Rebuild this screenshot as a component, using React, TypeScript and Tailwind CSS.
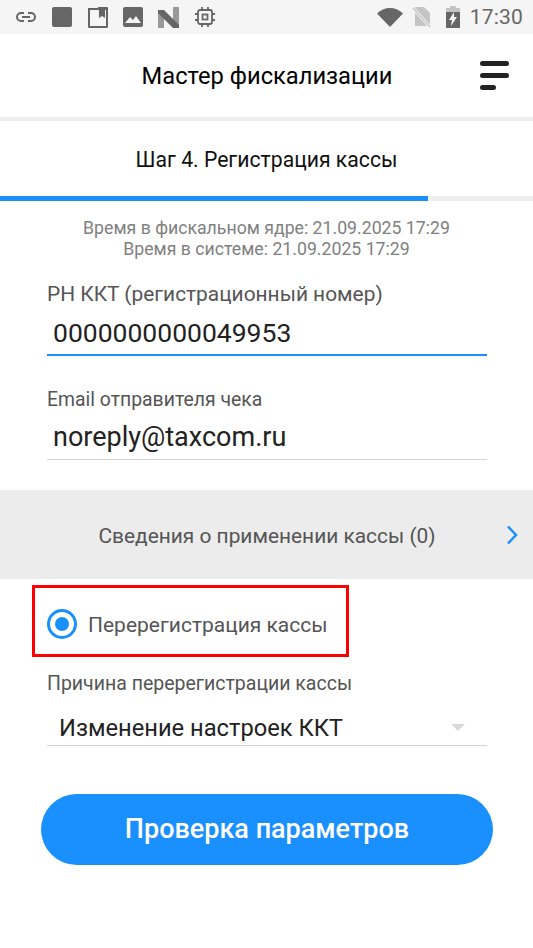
const font = { fontFamily: "Roboto, sans-serif" };

const StatusBar = () => (
  <div className="h-[34px] bg-[#f5f5f5] flex items-center pl-[15px] pr-[10px] text-[#666666]">
    <svg width="22" height="12" viewBox="0 0 22 12" fill="none" stroke="#666" strokeWidth="2" className="mr-[15px]">
      <path d="M9 2H6a4 4 0 0 0 0 8h3M13 2h3a4 4 0 0 1 0 8h-3M7 6h8" />
    </svg>
    <div className="w-5 h-5 bg-[#666666] rounded-[2px] mr-[16px]" />
    <svg width="20" height="21" viewBox="0 0 20 21" fill="#666" className="mr-[15px]">
      <path fillRule="evenodd" d="M0 1h10V0h9a1 1 0 0 1 1 1v19a1 1 0 0 1-1 1H1a1 1 0 0 1-1-1V1zm2 2v16h16V3h-1v8l-3-2-3 2V3H2z" />
    </svg>
    <svg width="20" height="20" viewBox="0 0 20 20" className="mr-[15px]">
      <rect width="20" height="20" rx="2" fill="#666" />
      <path d="M2 16l5-6 3 3 3-4 5 7z" fill="#f5f5f5" />
    </svg>
    <svg width="21" height="21" viewBox="0 0 21 21" className="mr-[16px]">
      <path d="M0 3h6v18H0z" fill="#999" />
      <path d="M15 0h6v18h-6z" fill="#999" />
      <path d="M0 3h6l15 15v3h-6L0 6z" fill="#666" />
    </svg>
    <svg width="20" height="20" viewBox="0 0 20 20" fill="none" stroke="#666" strokeWidth="1.8">
      <rect x="3" y="3" width="14" height="14" rx="2" />
      <rect x="7.500" y="7.500" width="5" height="5" />
      <path d="M7 0v3M13 0v3M7 17v3M13 17v3M0 7h3M0 13h3M17 7h3M17 13h3" />
    </svg>
    <div className="flex-1" />
    <svg width="26" height="20" viewBox="0 0 26 20" className="mr-[9px]">
      <path d="M0 6.500C3.500 3 8 1 13 1s9.500 2 13 5.500L13 20z" fill="#666" />
    </svg>
    <svg width="19" height="21" viewBox="0 0 19 21" className="mr-[15px]">
      <path d="M3 0h9l6 6v13H3z" fill="#c4c4c4" />
      <path d="M1 1l17 19" stroke="#f5f5f5" strokeWidth="3" />
      <path d="M1 1l17 19" stroke="#c4c4c4" strokeWidth="1.2" />
    </svg>
    <svg width="14" height="22" viewBox="0 0 14 22" className="mr-[10px]">
      <path d="M4 0h6v2h4v20H0V2h4z" fill="#c4c4c4" />
      <path d="M0 6h14v16H0z" fill="#666" />
      <path d="M8 6L3 14h3l-1 6 6-9H8z" fill="#f5f5f5" />
    </svg>
    <span className="text-[21px] leading-none tracking-[0.2px]">17:30</span>
  </div>
);

export default function App() {
  return (
    <div style={font} className="w-[533px] h-[948px] bg-white overflow-hidden flex flex-col">
      <StatusBar />
      <div className="h-[87px] pt-[2px] flex items-center border-b-[4px] border-[#eeeeee] relative">
        <div className="w-full pl-[1px] text-center text-[23.7px] text-black">Мастер фискализации</div>
        <div className="absolute left-[480px] top-[27px] flex flex-col gap-[7px]">
          <div className="w-[29px] h-[5px] rounded-full bg-[#222222]" />
          <div className="w-[29px] h-[5px] rounded-full bg-[#222222]" />
          <div className="w-[16px] h-[5px] rounded-full bg-[#222222]" />
        </div>
      </div>
      <div className="h-[75px] pt-[3px] flex items-center justify-center text-[21.2px] text-[#111111]">Шаг 4. Регистрация кассы</div>
      <div className="h-[5px] bg-[#eeeeee]">
        <div className="h-full w-[428px] bg-[#1a90ff]" />
      </div>
      <div className="pt-[17px] text-center text-[17.7px] leading-[21px] text-[#808080]">
        <div>Время в фискальном ядре: 21.09.2025 17:29</div>
        <div>Время в системе: 21.09.2025 17:29</div>
      </div>
      <div className="pl-[47px] pr-[46px] pt-[22px]">
        <div className="text-[20.9px] leading-[24px] text-[#555555]">РН ККТ (регистрационный номер)</div>
        <div className="h-[50px] border-b-[2px] border-[#1a90ff] pl-[6px] pt-[11px] text-[26.5px] leading-[32px] text-[#222222]">0000000000049953</div>
        <div className="pt-[33px] text-[19.4px] leading-[22px] text-[#555555]">Email отправителя чека</div>
        <div className="h-[49px] border-b border-[#d4d4d4] pl-[6px] pt-[10px] text-[27px] leading-[32px] text-[#222222]">noreply@taxcom.ru</div>
      </div>
      <div className="mt-[30px] h-[89px] pt-[5px] bg-[#ececec] flex items-center relative">
        <div className="w-full text-center text-[20.9px] pl-[1px] text-[#555555]">Сведения о применении кассы (0)</div>
        <svg width="12" height="20" viewBox="0 0 12 20" fill="none" stroke="#1a90ff" strokeWidth="2.500" className="absolute left-[506px] top-[35px]">
          <path d="M2 1.500L10 10 2 18.500" />
        </svg>
      </div>
      <div className="px-[32px] pt-[6px]">
        <div className="w-[317px] h-[72px] border-[3px] border-[#ff0000] flex items-center pl-[12px] pt-[5px]">
          <div className="w-[30px] h-[30px] rounded-full border-[3px] border-[#1a90ff] flex items-center justify-center">
            <div className="w-[14px] h-[14px] rounded-full bg-[#1a90ff]" />
          </div>
          <span className="ml-[11px] mt-[5px] text-[21px] text-[#555555]">Перерегистрация кассы</span>
        </div>
      </div>
      <div className="pl-[47px] pr-[46px] pt-[15px]">
        <div className="text-[19.5px] leading-[24px] text-[#555555]">Причина перерегистрации кассы</div>
        <div className="h-[50px] border-b border-[#d4d4d4] pl-[12px] pt-[18px] text-[23.7px] leading-[28px] text-[#222222] relative">
          Изменение настроек ККТ
          <div className="absolute left-[404px] top-[28px] w-0 h-0 border-l-[7px] border-r-[7px] border-t-[7px] border-l-transparent border-r-transparent border-t-[#d9d9d9]" />
        </div>
      </div>
      <div className="px-[41px] pt-[48px]">
        <div className="h-[71px] w-[452px] rounded-full bg-[#1a90ff] flex items-center justify-center text-white text-[27px] font-medium">Проверка параметров</div>
      </div>
    </div>
  );
}
